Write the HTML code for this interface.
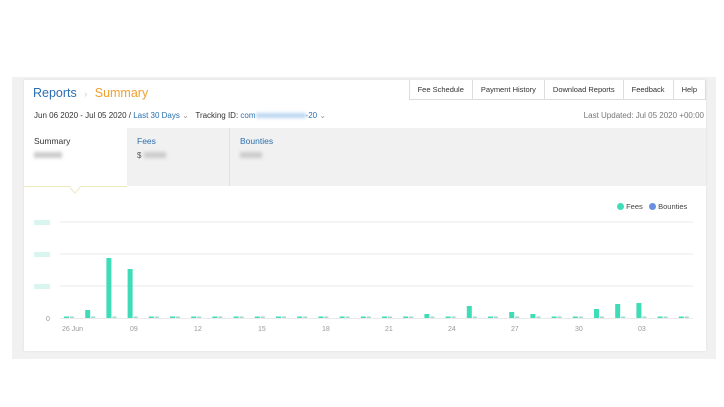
<!DOCTYPE html><html><head><style>
body{margin:0;width:724px;height:407px;background:#fff;font-family:"Liberation Sans",sans-serif;position:relative;overflow:hidden}
.outer{position:absolute;left:12px;top:77px;width:704px;height:282px;background:#f1f1f1}
.card{position:absolute;left:24px;top:80px;width:682px;height:271px;background:#fff;box-shadow:0 0 2px #ddd}
.abs{position:absolute;white-space:nowrap}
.nav{position:absolute;top:80px;right:18px;display:flex;border-left:1px solid #ddd;border-bottom:1px solid #ddd}
.nav div{font-size:7.5px;color:#333;padding:0 8px;height:19px;line-height:19px;border-right:1px solid #ddd}
.tabs{position:absolute;left:24px;top:128px;width:682px;height:58px;background:#f1f1f1}
.blur{display:inline-block;width:28px;height:6px;background:#ccc;filter:blur(1.5px)}
</style></head><body>
<div class="outer"></div><div class="card"></div>
<div class="abs" style="left:33px;top:86px;font-size:12.5px;color:#2a6fb0">Reports <span style="color:#ccc;font-size:9px;margin:0 4px">›</span> <span style="color:#f0a030">Summary</span></div>
<div class="nav"><div>Fee Schedule</div><div>Payment History</div><div>Download Reports</div><div>Feedback</div><div>Help</div></div>
<div class="abs" style="left:34px;top:111px;font-size:8px;color:#333">Jun 06 2020 - Jul 05 2020 / <span style="color:#2a6fb0">Last 30 Days</span> <span style="color:#999">⌄</span> &nbsp; Tracking ID: <span style="color:#2a6fb0">com</span><span style="display:inline-block;width:50px;height:5px;background:#bcd6f0;filter:blur(1.5px)"></span><span style="color:#2a6fb0">-20</span> <span style="color:#999">⌄</span></div>
<div class="abs" style="right:20px;top:111px;font-size:8px;color:#777">Last Updated: Jul 05 2020 +00:00</div>
<div class="tabs"></div>
<div class="abs" style="left:24px;top:128px;width:103px;height:58px;background:#fff;border-bottom:1px solid #eee8c0"></div>
<div class="abs" style="left:229px;top:128px;width:1px;height:58px;background:#e0e0e0"></div>
<div class="abs" style="left:71px;top:184px;width:7px;height:7px;background:#fff;border-right:1px solid #eee8c0;border-bottom:1px solid #eee8c0;transform:rotate(45deg)"></div>
<div class="abs" style="left:34px;top:136px;font-size:8.5px;color:#333">Summary<br><span class="blur" style="margin-top:6px"></span></div>
<div class="abs" style="left:137px;top:136px;font-size:8.5px;color:#2a6fb0">Fees<br><span style="color:#555;font-size:8px">$</span> <span class="blur" style="width:22px;margin-top:6px"></span></div>
<div class="abs" style="left:240px;top:136px;font-size:8.5px;color:#2a6fb0">Bounties<br><span class="blur" style="width:22px;margin-top:6px"></span></div>
<div class="abs" style="left:617px;top:202px;font-size:7.5px;color:#444"><span style="display:inline-block;width:7px;height:7px;border-radius:50%;background:#3fdcb8;vertical-align:-1px"></span> Fees &nbsp; <span style="display:inline-block;width:7px;height:7px;border-radius:50%;background:#6a8fe0;vertical-align:-1px"></span> Bounties</div>
<svg class="abs" style="left:0;top:0" width="724" height="407" font-family="Liberation Sans" font-size="7" fill="#999">
<g stroke="#eaeaea" stroke-width="1"><line x1="60" y1="222" x2="693" y2="222"/><line x1="60" y1="254" x2="693" y2="254"/><line x1="60" y1="286" x2="693" y2="286"/><line x1="60" y1="318.5" x2="693" y2="318.5"/></g>
<g fill="#d8f5ee"><rect x="34" y="220" width="16" height="5"/><rect x="34" y="252" width="16" height="5"/><rect x="34" y="284" width="16" height="5"/></g>
<text x="46" y="321">0</text>
<g fill="#3fdcb8" id="b"></g>
<text x="62" y="331">26 Jun</text><text x="130" y="331">09</text><text x="194" y="331">12</text><text x="258" y="331">15</text><text x="322" y="331">18</text><text x="385" y="331">21</text><text x="448" y="331">24</text><text x="511" y="331">27</text><text x="575" y="331">30</text><text x="638" y="331">03</text>
</svg>
<script>
var h={1:8,2:60,3:49,17:4,19:12,21:6,22:4,25:9,26:14,27:15};var g=document.getElementById('b'),s='';
for(var i=0;i<30;i++){var x=64+21.2*i,v=h[i]||1.5;s+='<rect x="'+x+'" y="'+(318-v)+'" width="5" height="'+v+'"/><rect x="'+(x+6)+'" y="316.5" width="4" height="1.5" fill="#9fd8cc"/>';}
g.innerHTML=s;
</script>
</body></html>
